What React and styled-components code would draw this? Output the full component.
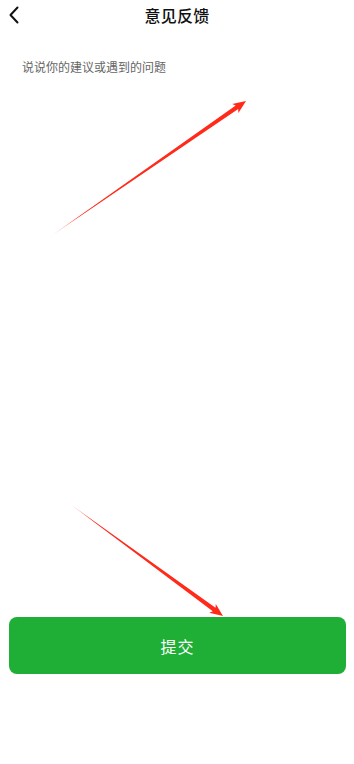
import React from 'react';
import styled, { createGlobalStyle } from 'styled-components';

const GlobalStyle = createGlobalStyle`
  html, body {
    margin: 0;
    padding: 0;
    background: #fff;
  }
  body {
    font-family: "Noto Sans CJK SC", "Noto Sans", sans-serif;
  }
`;

// tapered annotation arrow: thin tail, thicker near the head
function arrowPoints(x1, y1, x2, y2, shaft, headLen, headHalf) {
  const dx = x2 - x1;
  const dy = y2 - y1;
  const len = Math.hypot(dx, dy);
  const ux = dx / len;
  const uy = dy / len;
  const nx = -uy;
  const ny = ux;
  const bx = x2 - ux * headLen;
  const by = y2 - uy * headLen;
  const nb = (x, y, k) => `${(x + nx * k).toFixed(1)},${(y + ny * k).toFixed(1)}`;
  return [
    `${x1},${y1}`,
    nb(bx, by, shaft / 2),
    nb(bx - ux * 2, by - uy * 2, headHalf),
    `${x2},${y2}`,
    nb(bx - ux * 2, by - uy * 2, -headHalf),
    nb(bx, by, -shaft / 2),
  ].join(' ');
}

export default function App() {
  return (
    <>
      <GlobalStyle />
      <Page>
        <Header>
          <BackButton aria-label="返回">
            <svg width="12" height="18" viewBox="0 0 12 18">
              <path d="M9.5 1.5 L2.5 9 L9.5 16.5" fill="none" stroke="#111" strokeWidth="2" strokeLinecap="round" strokeLinejoin="round" />
            </svg>
          </BackButton>
          <Title>意见反馈</Title>
        </Header>
        <Feedback placeholder="说说你的建议或遇到的问题" />
        <Footer>
          <SubmitButton>提交</SubmitButton>
        </Footer>
        <Overlay width="354" height="764" viewBox="0 0 354 764">
          <defs>
            <linearGradient id="a1" x1="51" y1="236" x2="246" y2="101" gradientUnits="userSpaceOnUse">
              <stop offset="0" stopColor="#ff2a1a" stopOpacity="0.3" />
              <stop offset="0.15" stopColor="#ff2a1a" stopOpacity="1" />
            </linearGradient>
            <linearGradient id="a2" x1="70" y1="504" x2="223" y2="616" gradientUnits="userSpaceOnUse">
              <stop offset="0" stopColor="#ff2a1a" stopOpacity="0.3" />
              <stop offset="0.15" stopColor="#ff2a1a" stopOpacity="1" />
            </linearGradient>
          </defs>
          <polygon points={arrowPoints(51, 236, 246, 101, 4.5, 11, 5.5)} fill="url(#a1)" />
          <polygon points={arrowPoints(70, 504, 223, 616, 4.5, 11, 5.5)} fill="url(#a2)" />
        </Overlay>
      </Page>
    </>
  );
}

const Page = styled.div`
  position: relative;
  width: 354px;
  height: 764px;
  display: flex;
  flex-direction: column;
  background: #fff;
  overflow: hidden;
`;

const Header = styled.div`
  position: relative;
  height: 30px;
  display: flex;
  align-items: center;
  justify-content: center;
`;

const BackButton = styled.button`
  position: absolute;
  left: 8px;
  top: 6px;
  width: 14px;
  height: 18px;
  padding: 0;
  border: none;
  background: none;
  display: flex;
  align-items: center;
`;

const Title = styled.div`
  font-size: 16px;
  font-weight: 500;
  color: #111;
  letter-spacing: 0.2px;
`;

const Feedback = styled.textarea`
  flex: 1;
  margin: 0;
  padding: 28px 22px 0;
  border: none;
  outline: none;
  resize: none;
  font-family: "Noto Sans CJK SC", "Noto Sans", sans-serif;
  font-size: 12px;
  line-height: 18px;
  color: #333;
  background: transparent;

  &::placeholder {
    color: #666;
  }
`;

const Footer = styled.div`
  padding: 0 8px 90px 9px;
`;

const SubmitButton = styled.button`
  width: 100%;
  height: 57px;
  border: none;
  border-radius: 8px;
  background: #1faf37;
  color: #fff;
  font-family: "Noto Sans CJK SC", "Noto Sans", sans-serif;
  font-size: 16px;
  font-weight: 400;
  letter-spacing: 1px;
`;

const Overlay = styled.svg`
  position: absolute;
  left: 0;
  top: 0;
  pointer-events: none;
`;
